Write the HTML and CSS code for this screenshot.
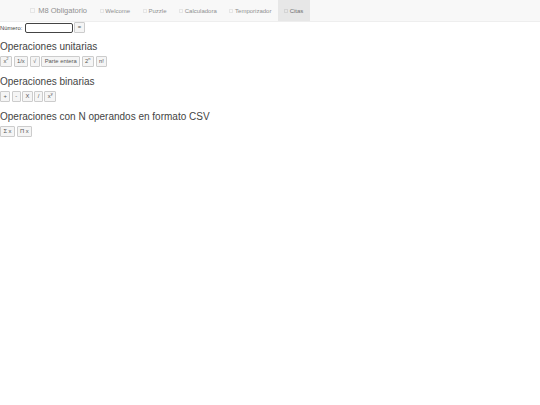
FILE: index.html
```html
<!DOCTYPE html>
<html lang="es">
<head>
    <meta charset="UTF-8">
    <title>Calculadora</title>
    <link rel="stylesheet" href="styles.css">
</head>
<body>
    <nav class="navbar">
        <a class="brand" href="#"><span class="glyph glyph-big"></span>M8 Obligatorio</a>
        <ul class="nav-links">
            <li><a href="#"><span class="glyph"></span>Welcome</a></li>
            <li><a href="#"><span class="glyph"></span>Puzzle</a></li>
            <li><a href="#"><span class="glyph"></span>Calculadora</a></li>
            <li><a href="#"><span class="glyph"></span>Temporizador</a></li>
            <li class="active"><a href="#"><span class="glyph"></span>Citas</a></li>
        </ul>
    </nav>

    <div class="number-row">
        <label for="numero">Número:</label>
        <input type="text" id="numero" class="number-input">
        <button class="btn">=</button>
    </div>

    <h3>Operaciones unitarias</h3>
    <div class="btn-row">
        <button class="btn">x<sup>2</sup></button>
        <button class="btn">1/x</button>
        <button class="btn">√</button>
        <button class="btn">Parte entera</button>
        <button class="btn">2<sup>n</sup></button>
        <button class="btn">n!</button>
    </div>

    <h3>Operaciones binarias</h3>
    <div class="btn-row">
        <button class="btn">+</button>
        <button class="btn">-</button>
        <button class="btn">X</button>
        <button class="btn">/</button>
        <button class="btn">x<sup>y</sup></button>
    </div>

    <h3>Operaciones con N operandos en formato CSV</h3>
    <div class="btn-row">
        <button class="btn">Σ x</button>
        <button class="btn">Π x</button>
    </div>
</body>
</html>
```

FILE: styles.css
```css
body {
    margin: 0;
    font-family: "Liberation Sans", Arial, sans-serif;
    font-size: 5.83px;
    color: #444;
    background-color: #fff;
}
.navbar {
    display: flex;
    align-items: stretch;
    height: 21px;
    padding-left: 24px;
    background-color: #f8f8f8;
    border-bottom: 1px solid #eee;
}
.navbar a {
    display: flex;
    align-items: center;
    height: 100%;
    color: #909090;
    text-decoration: none;
}
.brand {
    padding: 0 6.25px;
    font-size: 7.5px;
}
.nav-links {
    display: flex;
    margin: 0;
    padding: 0;
    list-style: none;
    font-size: 6px;
}
.nav-links li a {
    padding: 0 6.3px;
}
.nav-links .active {
    background-color: #e7e7e7;
}
.nav-links .active a {
    color: #707070;
}
.nav-links .active .glyph {
    border-color: #d4d4d4;
}
.glyph {
    display: inline-block;
    box-sizing: border-box;
    width: 4px;
    height: 4px;
    margin-right: 1.7px;
    border: 1px solid #e6e6e6;
}
.glyph-big {
    width: 5px;
    height: 5px;
    margin-right: 3px;
}
.number-row {
    display: flex;
    align-items: center;
    height: 10px;
    padding-top: 0.5px;
}
.number-input {
    box-sizing: border-box;
    width: 48px;
    height: 10px;
    margin: 0 1.5px 0 2.5px;
    padding: 0;
    border: 1px solid #444;
    border-radius: 2px;
    background: #fff;
}
h3 {
    margin: 8.8px 0 4.2px;
    font-size: 10px;
    font-weight: 400;
    line-height: 11px;
    color: #444;
}
.btn-row {
    display: flex;
    gap: 1.6px;
}
.btn {
    box-sizing: border-box;
    height: 11px;
    padding: 0 2.4px;
    font-family: inherit;
    font-size: 5.83px;
    line-height: 9px;
    color: #555;
    background-color: #f5f5f5;
    border: 1px solid #ccc;
    border-radius: 1px;
}
.btn sup {
    font-size: 4px;
    line-height: 0;
}
```
